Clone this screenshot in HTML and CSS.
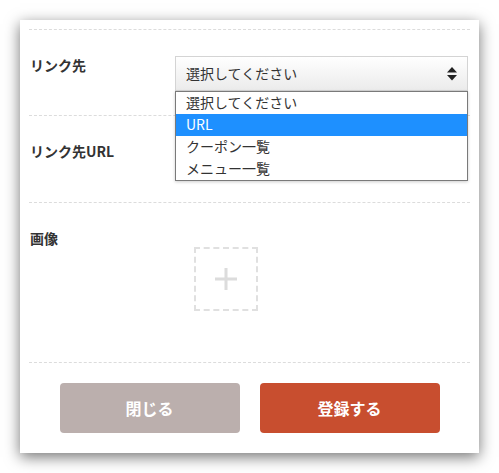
FILE: index.html
```html
<!DOCTYPE html>
<html lang="ja">
<head>
<meta charset="utf-8">
<link rel="stylesheet" href="styles.css">
</head>
<body>
<div class="card">
  <div class="row row-link">
    <div class="label">リンク先</div>
    <div class="field">
      <div class="select">
        <span>選択してください</span>
        <svg class="arrows" width="10" height="14" viewBox="0 0 10 14">
          <polygon points="5,0 10,5.5 0,5.5" fill="#222"/>
          <polygon points="0,8 10,8 5,13.5" fill="#222"/>
        </svg>
        <ul class="options">
          <li>選択してください</li>
          <li class="active">URL</li>
          <li>クーポン一覧</li>
          <li>メニュー一覧</li>
        </ul>
      </div>
    </div>
  </div>
  <div class="row row-url">
    <div class="label">リンク先URL</div>
    <div class="field">
      <div class="input"></div>
    </div>
  </div>
  <div class="row row-image">
    <div class="label">画像</div>
    <div class="field">
      <div class="upload">
        <svg width="22" height="22" viewBox="0 0 22 22">
          <rect x="9.5" y="0" width="3" height="22" fill="#dcdcdc"/>
          <rect x="0" y="9.5" width="22" height="3" fill="#dcdcdc"/>
        </svg>
      </div>
    </div>
  </div>
  <div class="footer">
    <button class="btn btn-close">閉じる</button>
    <button class="btn btn-submit">登録する</button>
  </div>
</div>
</body>
</html>
```

FILE: styles.css
```css
* { box-sizing: border-box; }
html, body { margin: 0; background: #fff; }
body {
  padding: 20px;
  font-family: "Noto Sans CJK JP", "Noto Sans", sans-serif;
  color: #333;
}
.card {
  width: 459px;
  height: 433px;
  background: #fff;
  padding: 9px 9px 0 9px;
  box-shadow: 0 4px 14px rgba(0,0,0,0.55);
}
.row {
  display: flex;
  border-top: 1px dashed #dcdcdc;
  padding: 26px 0 24px 1px;
}
.row-url { padding-bottom: 25px; min-height: 87px; }
.row-image { min-height: 160px; }
.label {
  width: 145px;
  flex: none;
  font-size: 14px;
  font-weight: bold;
  line-height: 18px;
  color: #333;
}
.field { flex: 1; }
.select {
  position: relative;
  width: 293px;
  height: 35px;
  border: 1px solid #d4d4d4;
  background: linear-gradient(#ffffff, #ebebeb);
  font-size: 14px;
  line-height: 33px;
  padding-left: 10px;
  color: #333;
}
.arrows {
  position: absolute;
  right: 10px;
  top: 10px;
}
.options {
  position: absolute;
  top: 34px;
  left: -1px;
  width: 293px;
  margin: 0;
  padding: 0;
  list-style: none;
  border: 1px solid #7a7a7a;
  background: #fff;
  z-index: 2;
  box-shadow: 0 1px 3px rgba(0,0,0,0.2);
}
.options li {
  height: 22px;
  line-height: 21px;
  padding-left: 10px;
  font-size: 14px;
  color: #333;
}
.options li.active {
  background: #1e90ff;
  color: #fff;
}
.input {
  width: 293px;
  height: 35px;
  border: 1px solid #d4d4d4;
}
.upload {
  margin: 18px 0 0 19px;
  width: 64px;
  height: 64px;
  border: 2px dashed #e0e0e0;
  display: flex;
  align-items: center;
  justify-content: center;
}
.footer {
  border-top: 1px dashed #dcdcdc;
  display: flex;
  justify-content: center;
  gap: 20px;
  padding-top: 20px;
}
.btn {
  width: 180px;
  height: 50px;
  border: none;
  border-radius: 4px;
  color: #fff;
  font-family: "Noto Sans CJK JP", sans-serif;
  font-size: 16px;
  font-weight: bold;
}
.btn-close { background: #bbafad; }
.btn-submit { background: #c84e2f; }
```
